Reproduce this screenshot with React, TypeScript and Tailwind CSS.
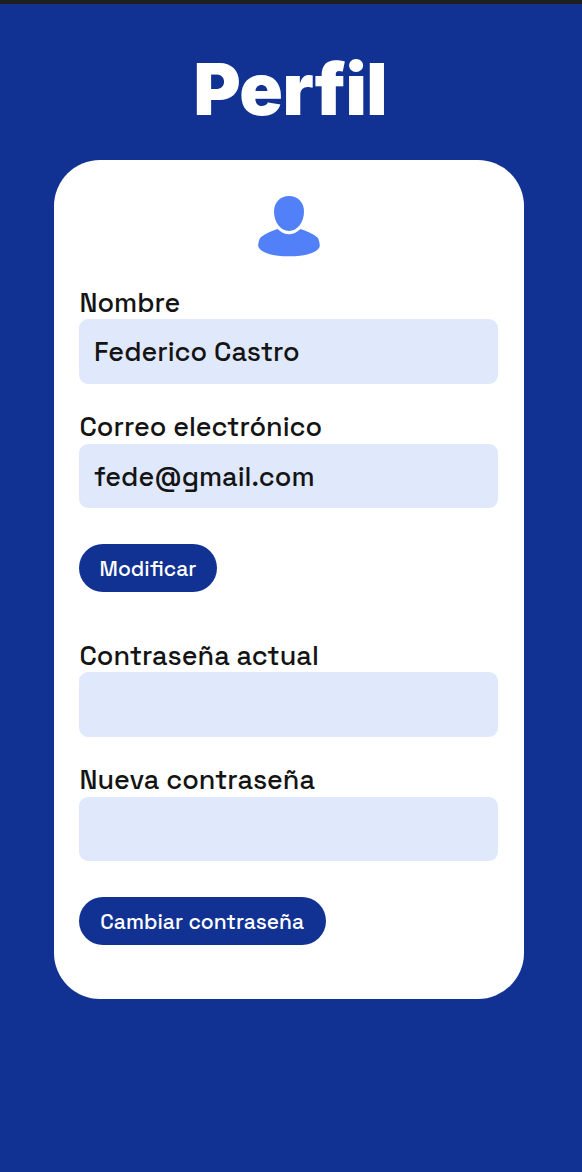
function UserIcon() {
  return (
    <svg className="block h-[62px] w-[64px]" viewBox="0 0 64 62" fill="#5180f8" aria-hidden="true">
      <path d="M32 1C41 1 47 7.5 47 16.5C47 27 40.500 36 32 36C23.500 36 17 27 17 16.500C17 7.500 23 1 32 1Z" />
      <path d="M20.500 34C28 41 36 41 43.500 34C50 36 56.500 39 60.500 42.500C61.800 44 62.800 48.500 62.800 51C62.500 53 60.500 55 57.500 56.800C52 60 43 61.300 32 61.300C21 61.300 12 60 6.500 56.800C3.500 55 1.500 53 1.200 51C1.200 48.500 2.200 44 3.500 42.500C7.500 39 14 36 20.500 34Z" />
    </svg>
  );
}

type FieldProps = {
  label: string;
  value?: string;
  type?: string;
};

function Field({ label, value = "", type = "text" }: FieldProps) {
  return (
    <label className="block">
      <span className="block h-8 pt-[0.3px] pl-[0.5px] text-[27px] leading-8 font-medium whitespace-nowrap">
        {label}
      </span>
      <input
        type={type}
        defaultValue={value}
        className="mt-px block h-[64.500px] w-full rounded-[9px] bg-[#e0e8fc] px-[15px] pt-[0.5px] text-[27px] font-medium outline-none"
      />
    </label>
  );
}

export default function App() {
  return (
    <main className="h-[1172px] w-full overflow-hidden border-t-4 border-[#1f1f1f] bg-[#113292] font-['Space_Grotesk','Inter',sans-serif] text-[#141414] antialiased">
      <h1 className="mt-[41px] h-[88px] pr-[1.500px] text-center font-['Inter',sans-serif] text-[72px] leading-[88px] font-black tracking-[-0.6px] text-white">
        Perfil
      </h1>
      <section className="mt-[27.300px] ml-[53.500px] flex h-[839px] w-[470px] flex-col rounded-[46px] bg-white px-[25.500px] pt-[35px]">
        <div className="flex justify-center">
          <UserIcon />
        </div>
        <form className="mt-[29px] flex flex-col items-start">
          <div className="flex w-full flex-col gap-[27px]">
            <Field label="Nombre" value="Federico Castro" />
            <Field label="Correo electrónico" value="fede@gmail.com" />
          </div>
          <button type="button" className="mt-9 h-12 w-[138px] rounded-full bg-[#113292] pt-px text-[21px] font-medium whitespace-nowrap text-white">
            Modificar
          </button>
        </form>
        <form className="mt-[47px] flex flex-col items-start">
          <div className="flex w-full flex-col gap-[27px]">
            <Field label="Contraseña actual" type="password" />
            <Field label="Nueva contraseña" type="password" />
          </div>
          <button type="button" className="mt-9 h-12 w-[246.500px] rounded-full bg-[#113292] pt-px text-[21px] font-medium whitespace-nowrap text-white">
            Cambiar contraseña
          </button>
        </form>
      </section>
    </main>
  );
}
